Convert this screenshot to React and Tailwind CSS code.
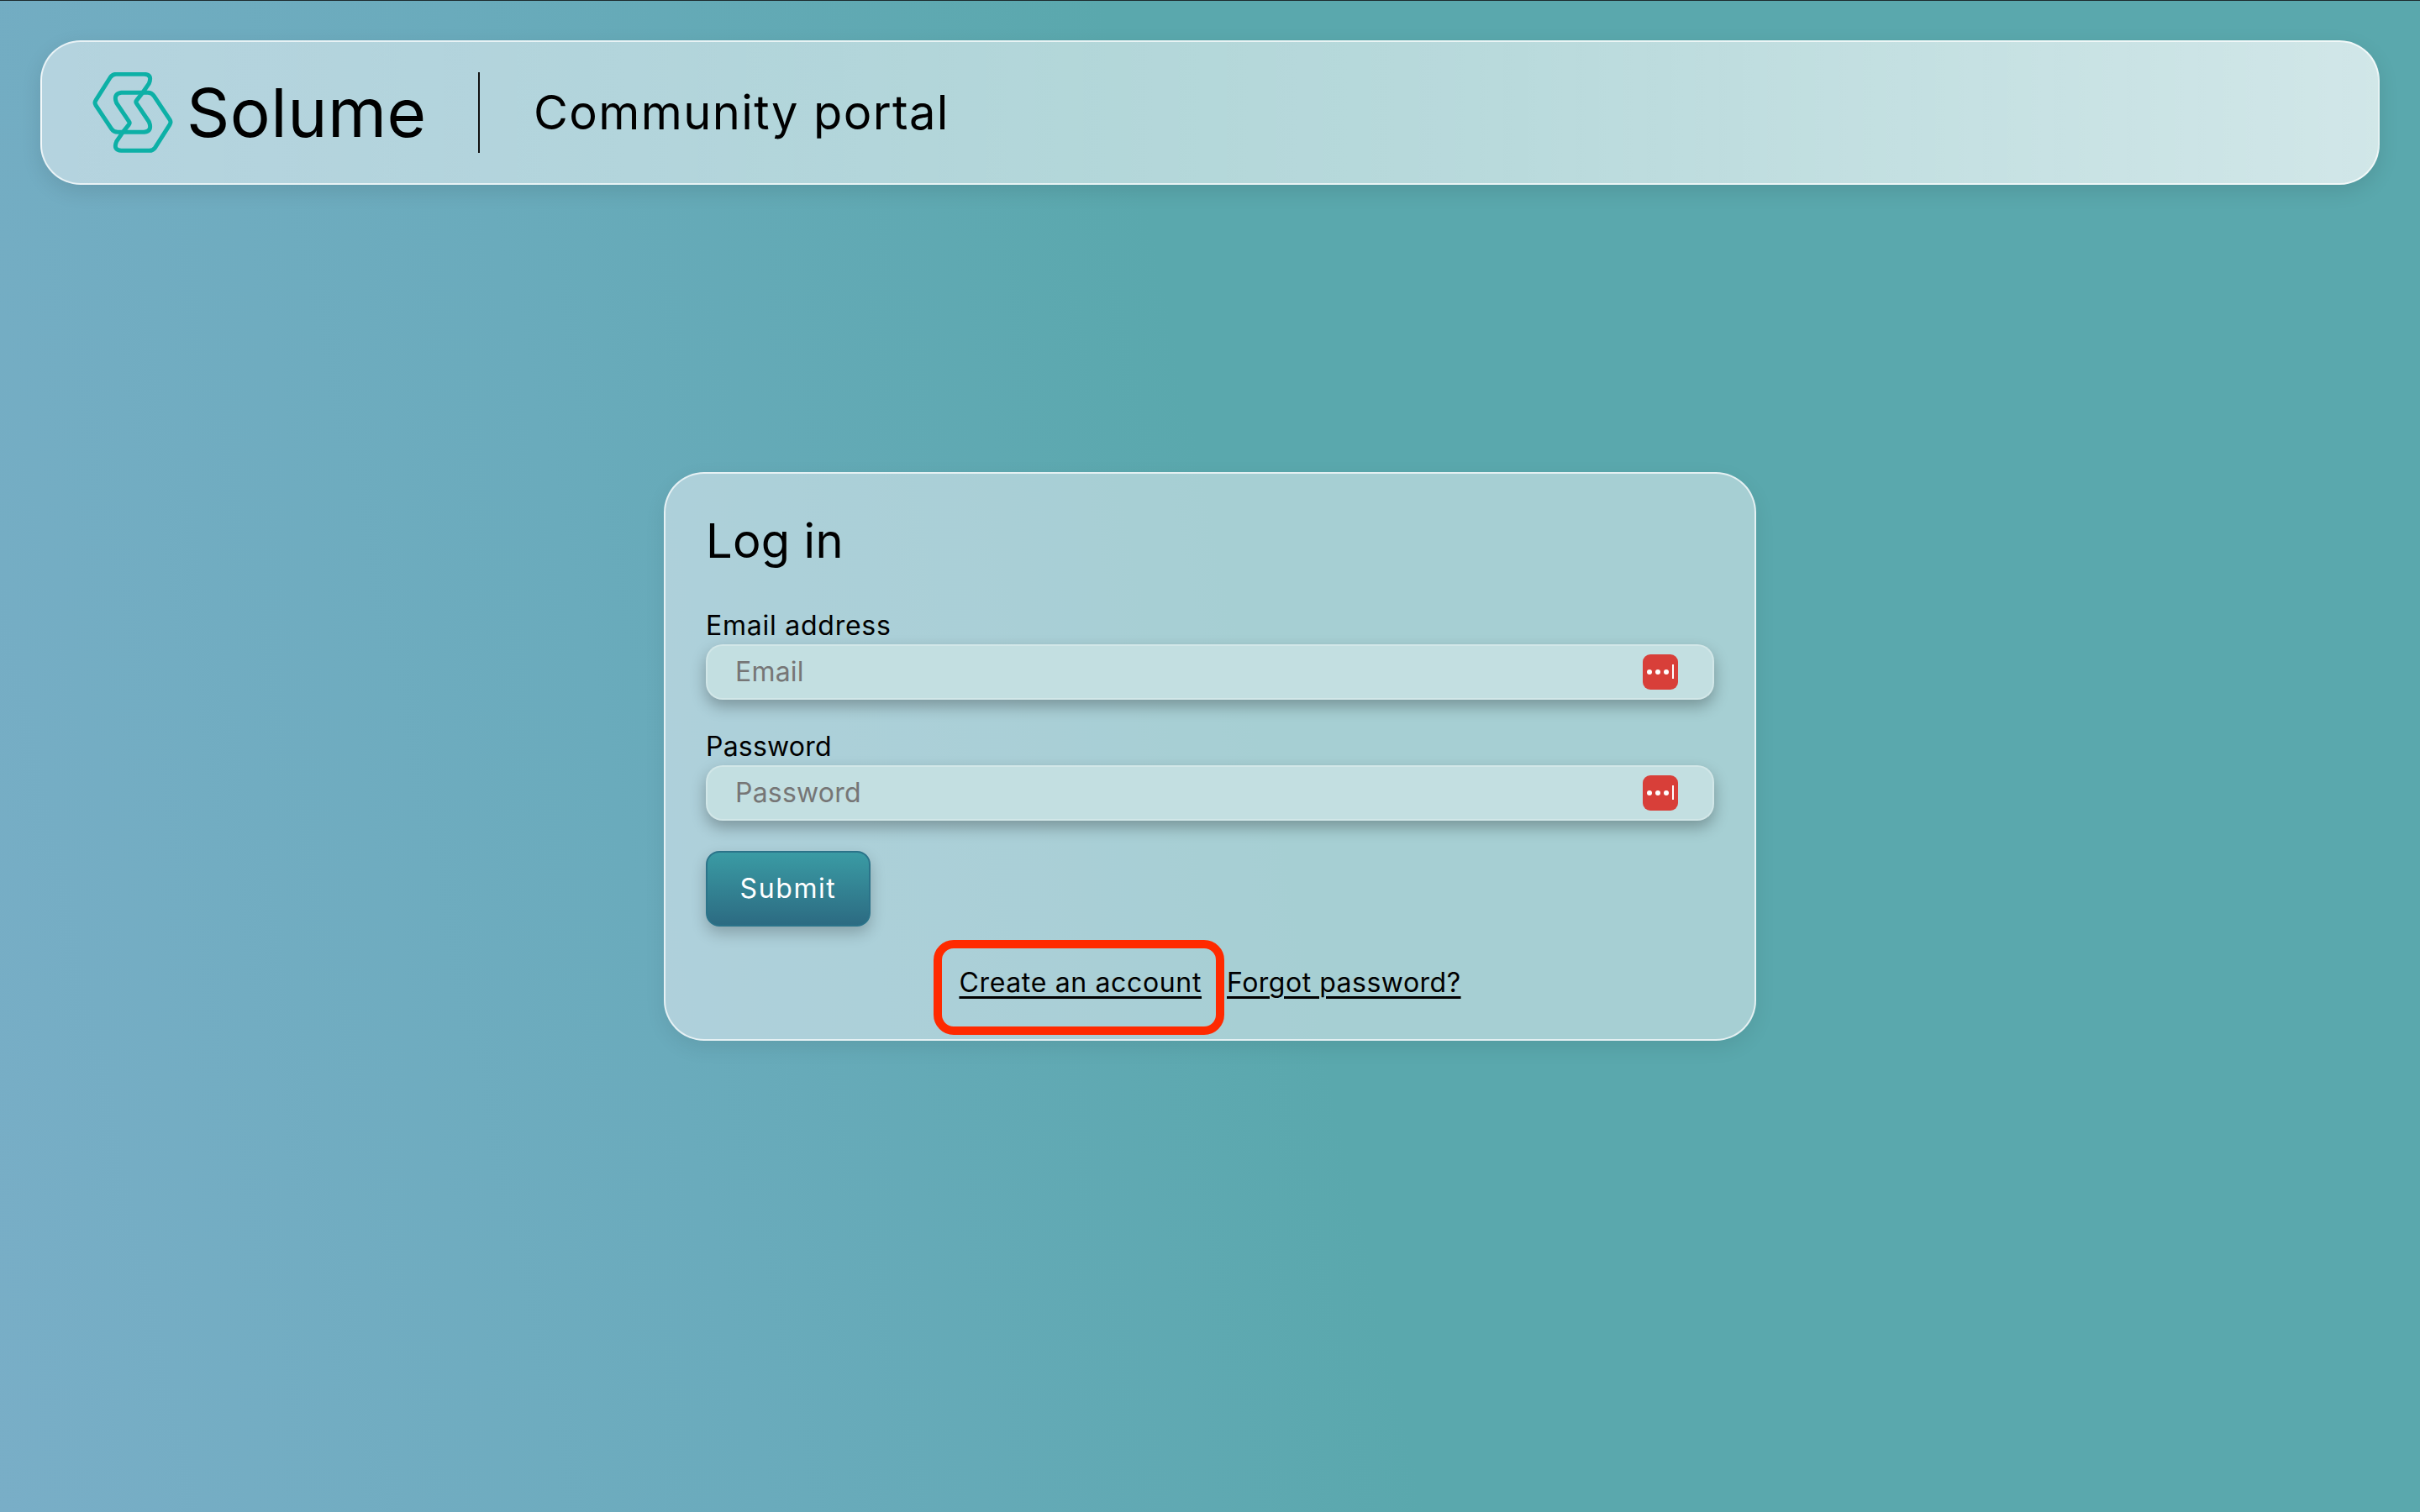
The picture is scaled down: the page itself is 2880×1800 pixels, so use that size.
const FONT = "font-['Inter','Noto_Sans',sans-serif]";

function Logo() {
  const a =
    "M240 120 L262 88 Q275 56 245 55 L145 55 Q132 55 124 66 L72 148 Q66 157 72 166 L128 250 Q136 262 150 262 L245 262 Q275 258 262 225 L218 160 Q213 154 218 148 Z";
  return (
    <svg viewBox="60 48 288 288" className="w-[96px] h-[96px] shrink-0" fill="none" stroke="#0db0a6" strokeWidth="15" strokeLinejoin="round">
      <path d={a} />
      <path d={a} transform="rotate(180 204 191.5)" />
    </svg>
  );
}

function KeyIcon() {
  return (
    <svg viewBox="0 0 42 42" className="w-[42px] h-[42px] shrink-0">
      <rect width="42" height="42" rx="9" fill="#d83f39" />
      <circle cx="8" cy="21" r="3" fill="#fff" />
      <circle cx="18" cy="21" r="3" fill="#fff" />
      <circle cx="28" cy="21" r="3" fill="#fff" />
      <rect x="35" y="12" width="2" height="17" fill="#fff" />
    </svg>
  );
}

function Field({ label, placeholder, type, labelClass, textClass }) {
  return (
    <label className={`block ${labelClass}`}>
      <span className={`block text-[32px] leading-[44px] text-black ${textClass}`}>{label}</span>
      <span className="flex items-center h-[66px] pl-[33px] pr-[41px] rounded-[20px] border-2 border-white/25 bg-[#c3dfe1] shadow-[0_8px_18px_rgba(0,0,0,0.28)]">
        <input
          type={type}
          placeholder={placeholder}
          className="flex-1 min-w-0 bg-transparent outline-none text-[32px] tracking-[0.2px] text-black placeholder:text-[#767676]"
        />
        <KeyIcon />
      </span>
    </label>
  );
}

export default function App() {
  return (
    <div className={`${FONT} min-h-[1800px] bg-[linear-gradient(78deg,#79aec7_0%,#6aabbc_28%,#5aa8ad_52%,#5aa8ad_100%)]`}>
      <div className="h-px bg-[#1d2b2e]" />
      <div className="px-[48px] pt-[47px]">
        <header className="flex items-center h-[172px] pl-[60px] rounded-[48px] border-2 border-white/70 bg-[linear-gradient(90deg,rgba(255,255,255,0.47),rgba(255,255,255,0.5)_25%,rgba(255,255,255,0.57)_60%,rgba(255,255,255,0.72))] shadow-[0_8px_24px_rgba(0,0,0,0.1)]">
          <Logo />
          <span className="ml-[16px] w-[347px] text-[80px] leading-none tracking-[0.5px] font-normal text-black">Solume</span>
          <span className="w-[2px] h-[96px] bg-[#111]" />
          <span className="ml-[64px] text-[56px] leading-none tracking-[1.4px] text-black">Community portal</span>
        </header>
      </div>
      <main className="w-[1300px] mx-auto mt-[342px] pt-[44px] pb-[47px] px-[48px] rounded-[48px] border-2 border-white/70 bg-[rgba(252,250,255,0.47)] shadow-[0_8px_24px_rgba(0,0,0,0.08)]">
        <h1 className="text-[56px] leading-[72px] font-normal tracking-[0.3px] text-black">Log in</h1>
        <form>
          <Field label="Email address" placeholder="Email" type="text" labelClass="mt-[43px]" textClass="tracking-[0.75px]" />
          <Field label="Password" placeholder="Password" type="password" labelClass="mt-[34px]" textClass="tracking-[0.2px]" />
          <button type="button" className="block mt-[36px] w-[196px] h-[90px] rounded-[16px] border-2 border-[#2b7389] bg-[linear-gradient(180deg,#3a9ba4,#2c6b82)] shadow-[0_8px_18px_rgba(0,0,0,0.22)] text-white text-[32px] tracking-[1.6px]">
            Submit
          </button>
          <div className="flex justify-center gap-[30px] mt-[47px] text-[32px] leading-[40px] text-black">
            <a href="#" className="relative underline decoration-[3px] underline-offset-[5px] tracking-[0.65px]">
              Create an account
              <span className="absolute -left-[30px] -right-[27px] -top-[31px] -bottom-[42px] rounded-[24px] border-[10px] border-[#ff2a00]" />
            </a>
            <a href="#" className="underline decoration-[3px] underline-offset-[5px] tracking-[0.5px]">Forgot password?</a>
          </div>
        </form>
      </main>
    </div>
  );
}
